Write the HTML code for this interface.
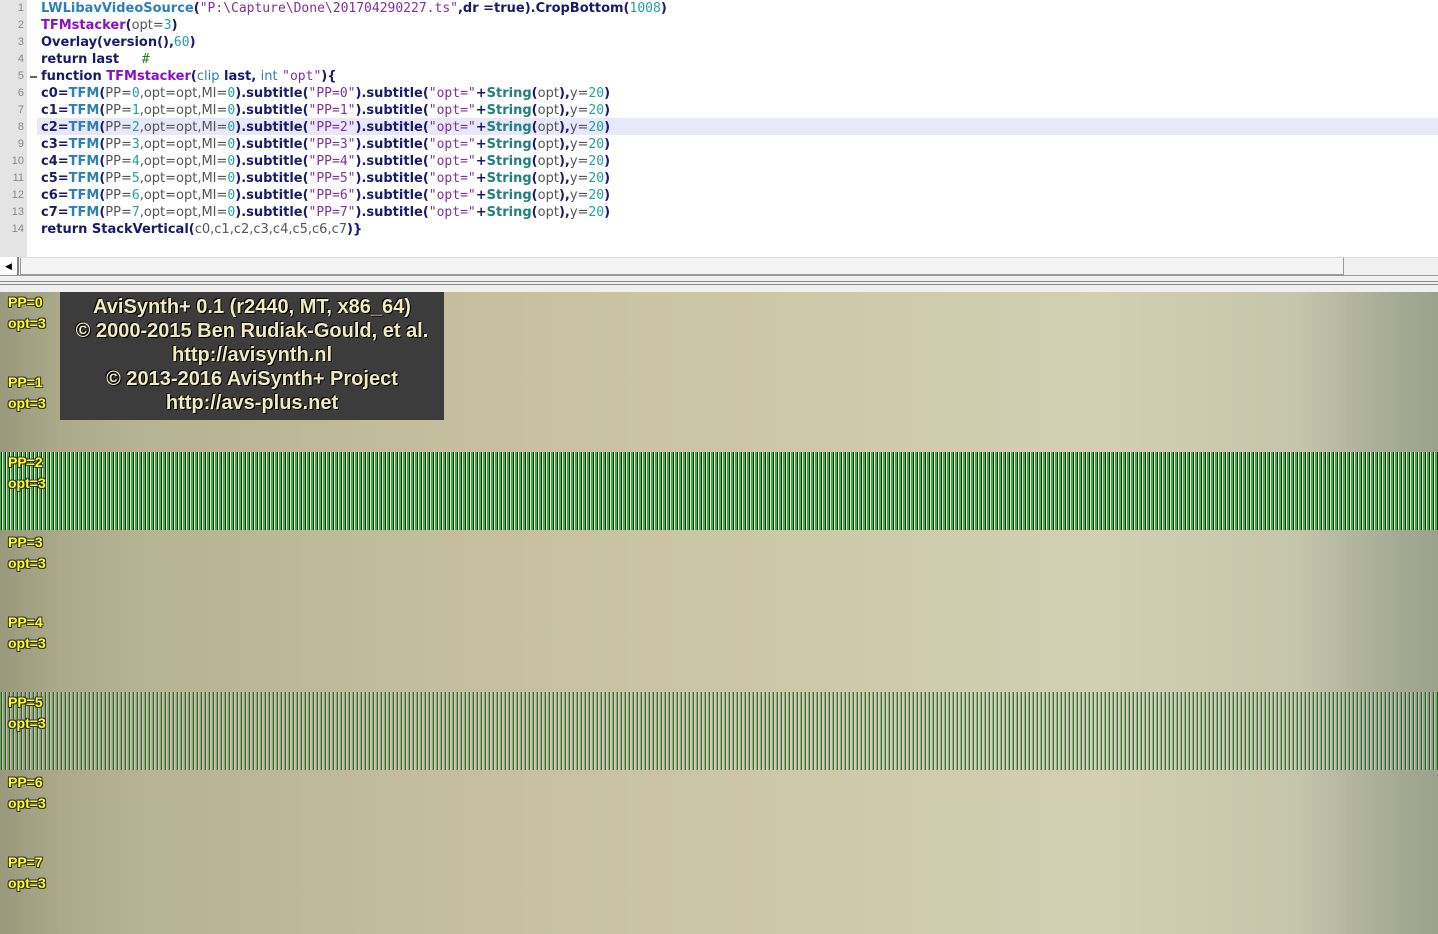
<!DOCTYPE html>
<html><head><meta charset="utf-8"><style>
*{margin:0;padding:0;box-sizing:border-box}
body{width:1438px;height:934px;overflow:hidden;background:#fff;font-family:"Liberation Sans",sans-serif;position:relative}
#ed{position:absolute;left:0;top:0;width:1438px;height:257px;background:#fff}
#gut{position:absolute;left:0;top:0;width:27px;height:257px;background:#e4e4e4}
.ln{position:absolute;left:0;width:24px;text-align:right;font-size:11px;color:#888;}
.cl{position:absolute;left:41px;font-family:"DejaVu Sans",sans-serif;font-size:13px;font-weight:bold;color:#1a1a6a;white-space:pre;line-height:17px}
.hl{position:absolute;left:37px;top:118px;width:1401px;height:17px;background:#e8e8fa}
.b{color:#2a80b8}.p{color:#8a10c8}.g{color:#555;font-weight:normal}.n{color:#20a0a0;font-weight:normal;font-family:"DejaVu Sans Mono",monospace;font-size:13px}
.s{color:#8030a0;font-weight:normal;font-family:"DejaVu Sans Mono",monospace;font-size:13px}
.t{color:#208080}
#sb{position:absolute;left:0;top:257px;width:1438px;height:18px;background:#f0f0f0;border-top:1px solid #ddd}
#sbl{position:absolute;left:0;top:257px;width:19px;height:18px;background:#fff;border-right:2px solid #888;font-size:9px;line-height:18px;text-align:center}
#thumb{position:absolute;left:20px;top:258px;width:1324px;height:17px;border:1px solid #999;border-top:none;background:#f4f4f4}
#split{position:absolute;left:0;top:275px;width:1438px;height:17px;background:#f0f0f0;border-top:1px solid #999}
#split:after{content:"";position:absolute;left:0;top:5px;width:1438px;height:2px;border-top:1px solid #888;border-bottom:1px solid #888}
#vid{position:absolute;left:0;top:292px;width:1438px;height:642px;
background:
linear-gradient(90deg,rgba(110,110,80,.35) 0,rgba(130,130,90,.15) 60px,rgba(0,0,0,0) 140px,rgba(0,0,0,0) 1300px,rgba(120,130,110,.35) 1438px),
linear-gradient(90deg,#b0af92 0,#b9b594 200px,#c6c0a0 500px,#cdc8a8 800px,#d2cfb3 1100px,#c5c5ab 1300px,#aeb29a 1438px)}
.band{position:absolute;left:0;width:1438px;height:78px}
#g1{top:160px;background:repeating-linear-gradient(90deg,#28c828 0,#28c828 1px,#111 1px,#111 2px,#fafaf0 2px,#fafaf0 3px,#38a838 3px,#38a838 4px)}
#g2{top:400px;opacity:.6;background:
repeating-linear-gradient(90deg,#22cc22 0,#22cc22 1px,#111 1px,#111 2px,#f0c8f0 2px,#f0c8f0 3px,rgba(0,0,0,0) 3px,rgba(0,0,0,0) 4px)}
.lab{position:absolute;left:8px;color:#ffff20;font-weight:bold;font-size:14px;line-height:21px;text-shadow:-1px -1px 0 #333,1px -1px 0 #333,-1px 1px 0 #333,1px 1px 0 #333}
#box{position:absolute;left:60px;top:292px;width:384px;height:128px;background:#3c3c3c;color:#f0ecc0;font-weight:bold;font-size:20px;line-height:24px;text-align:center;padding-top:3px;text-shadow:1px 1px 0 #000,-1px -1px 0 #000}
</style></head><body>
<div id="ed">
<div id="gut"></div>
<div class="hl"></div>
<div class="ln" style="top:2px">1</div><div class="ln" style="top:19px">2</div><div class="ln" style="top:36px">3</div><div class="ln" style="top:53px">4</div><div class="ln" style="top:70px">5</div><div class="ln" style="top:87px">6</div><div class="ln" style="top:104px">7</div><div class="ln" style="top:121px">8</div><div class="ln" style="top:138px">9</div><div class="ln" style="top:155px">10</div><div class="ln" style="top:172px">11</div><div class="ln" style="top:189px">12</div><div class="ln" style="top:206px">13</div><div class="ln" style="top:223px">14</div>
<div style="position:absolute;left:30px;top:76px;width:7px;height:2px;background:#666"></div>
<div class="cl" style="top:0"><span class="b">LWLibavVideoSource</span>(<span class="s">"P:\Capture\Done\201704290227.ts"</span>,dr =true).CropBottom(<span class="n">1008</span>)</div>
<div class="cl" style="top:17px"><span class="p">TFMstacker</span>(<span class="g">opt=</span><span class="n">3</span>)</div>
<div class="cl" style="top:34px">Overlay(version(),<span class="n">60</span>)</div>
<div class="cl" style="top:51px">return last     <span class="n" style="color:#208020">#</span></div>
<div class="cl" style="top:68px">function <span class="p">TFMstacker</span>(<span class="b" style="font-weight:normal">clip</span> last, <span class="b" style="font-weight:normal">int</span> <span class="s">"opt"</span>){</div>
<div class="cl" style="top:85px">c0=<span class="b">TFM</span>(<span class="g">PP=</span><span class="n">0</span><span class="g">,opt=opt,MI=</span><span class="n">0</span>).subtitle(<span class="s">"PP=0"</span>).subtitle(<span class="s">"opt="</span>+<span class="t">String</span>(<span class="g">opt</span>),<span class="g">y=</span><span class="n">20</span>)</div>
<div class="cl" style="top:102px">c1=<span class="b">TFM</span>(<span class="g">PP=</span><span class="n">1</span><span class="g">,opt=opt,MI=</span><span class="n">0</span>).subtitle(<span class="s">"PP=1"</span>).subtitle(<span class="s">"opt="</span>+<span class="t">String</span>(<span class="g">opt</span>),<span class="g">y=</span><span class="n">20</span>)</div>
<div class="cl" style="top:119px">c2=<span class="b">TFM</span>(<span class="g">PP=</span><span class="n">2</span><span class="g">,opt=opt,MI=</span><span class="n">0</span>).subtitle(<span class="s">"PP=2"</span>).subtitle(<span class="s">"opt="</span>+<span class="t">String</span>(<span class="g">opt</span>),<span class="g">y=</span><span class="n">20</span>)</div>
<div class="cl" style="top:136px">c3=<span class="b">TFM</span>(<span class="g">PP=</span><span class="n">3</span><span class="g">,opt=opt,MI=</span><span class="n">0</span>).subtitle(<span class="s">"PP=3"</span>).subtitle(<span class="s">"opt="</span>+<span class="t">String</span>(<span class="g">opt</span>),<span class="g">y=</span><span class="n">20</span>)</div>
<div class="cl" style="top:153px">c4=<span class="b">TFM</span>(<span class="g">PP=</span><span class="n">4</span><span class="g">,opt=opt,MI=</span><span class="n">0</span>).subtitle(<span class="s">"PP=4"</span>).subtitle(<span class="s">"opt="</span>+<span class="t">String</span>(<span class="g">opt</span>),<span class="g">y=</span><span class="n">20</span>)</div>
<div class="cl" style="top:170px">c5=<span class="b">TFM</span>(<span class="g">PP=</span><span class="n">5</span><span class="g">,opt=opt,MI=</span><span class="n">0</span>).subtitle(<span class="s">"PP=5"</span>).subtitle(<span class="s">"opt="</span>+<span class="t">String</span>(<span class="g">opt</span>),<span class="g">y=</span><span class="n">20</span>)</div>
<div class="cl" style="top:187px">c6=<span class="b">TFM</span>(<span class="g">PP=</span><span class="n">6</span><span class="g">,opt=opt,MI=</span><span class="n">0</span>).subtitle(<span class="s">"PP=6"</span>).subtitle(<span class="s">"opt="</span>+<span class="t">String</span>(<span class="g">opt</span>),<span class="g">y=</span><span class="n">20</span>)</div>
<div class="cl" style="top:204px">c7=<span class="b">TFM</span>(<span class="g">PP=</span><span class="n">7</span><span class="g">,opt=opt,MI=</span><span class="n">0</span>).subtitle(<span class="s">"PP=7"</span>).subtitle(<span class="s">"opt="</span>+<span class="t">String</span>(<span class="g">opt</span>),<span class="g">y=</span><span class="n">20</span>)</div>
<div class="cl" style="top:221px">return StackVertical(<span class="g">c0,c1,c2,c3,c4,c5,c6,c7</span>)}</div>
</div>
<div id="sb"></div><div id="thumb"></div><div id="sbl">◀</div>
<div id="split"></div>
<div id="vid">
<div class="band" id="g1"></div>
<div class="band" id="g2"></div>
<div class="lab" style="top:0">PP=0<br>opt=3</div>
<div class="lab" style="top:80px">PP=1<br>opt=3</div>
<div class="lab" style="top:160px">PP=2<br>opt=3</div>
<div class="lab" style="top:240px">PP=3<br>opt=3</div>
<div class="lab" style="top:320px">PP=4<br>opt=3</div>
<div class="lab" style="top:400px">PP=5<br>opt=3</div>
<div class="lab" style="top:480px">PP=6<br>opt=3</div>
<div class="lab" style="top:560px">PP=7<br>opt=3</div>
</div>
<div id="box">AviSynth+ 0.1 (r2440, MT, x86_64)<br>© 2000-2015 Ben Rudiak-Gould, et al.<br>http://avisynth.nl<br>© 2013-2016 AviSynth+ Project<br>http://avs-plus.net</div>
</body></html>
